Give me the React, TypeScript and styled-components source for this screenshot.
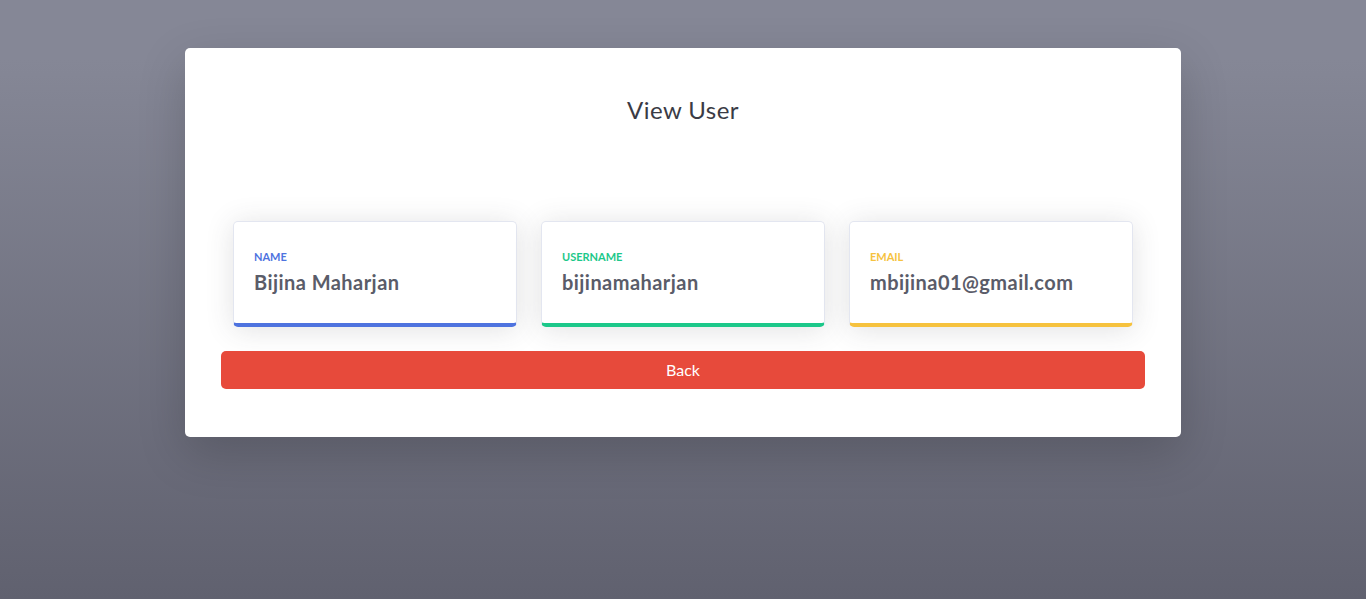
import React from "react";
import styled, { createGlobalStyle } from "styled-components";

const Global = createGlobalStyle`
  html, body { margin: 0; padding: 0; }
  body {
    min-height: 599px;
    background: linear-gradient(180deg, #858796 10%, #60616f 100%);
    font-family: Lato, "Open Sans", sans-serif;
  }
`;

const Page = styled.div`
  min-height: 599px;
  display: flex;
  justify-content: center;
  align-items: flex-start;
  padding-top: 48px;
  box-sizing: border-box;
`;

const Panel = styled.div`
  width: 996px;
  box-sizing: border-box;
  background: #fff;
  border-radius: 5px;
  box-shadow: 0 1rem 3rem rgba(0, 0, 0, 0.175);
  padding: 47px 36px 48px;
  display: flex;
  flex-direction: column;
`;

const Title = styled.h1`
  margin: 0;
  text-align: center;
  font-size: 24px;
  line-height: 29px;
  font-weight: 400;
  letter-spacing: 0.45px;
  color: #3a3b45;
`;

const CardRow = styled.div`
  margin-top: 97px;
  padding: 0 12px;
  display: grid;
  grid-template-columns: repeat(3, 1fr);
  gap: 24px;
`;

const InfoCard = styled.div<{ $accent: string }>`
  background: #fff;
  border: 1px solid #e3e6f0;
  border-bottom: 4px solid ${(p) => p.$accent};
  border-radius: 5px;
  box-shadow: 0 0.15rem 1.75rem rgba(58, 59, 69, 0.15);
  padding: 26px 20px 29px;
  display: flex;
  flex-direction: column;
  gap: 5px;
`;

const Label = styled.div<{ $accent: string }>`
  font-size: 11px;
  line-height: 17px;
  font-weight: 700;
  text-transform: uppercase;
  color: ${(p) => p.$accent};
`;

const Value = styled.div`
  font-size: 20px;
  line-height: 24px;
  font-weight: 700;
  letter-spacing: 0.45px;
  color: #5a5c69;
`;

const BackButton = styled.button`
  margin-top: 24px;
  height: 38px;
  padding: 0 0 2px;
  border: none;
  border-radius: 5px;
  background: #e74a3b;
  color: #fff;
  font-family: inherit;
  font-size: 16px;
  cursor: pointer;
`;

const items = [
  { label: "Name", value: "Bijina Maharjan", accent: "#4e73df" },
  { label: "Username", value: "bijinamaharjan", accent: "#1cc88a" },
  { label: "Email", value: "mbijina01@gmail.com", accent: "#f6c23e" },
];

export default function App() {
  return (
    <>
      <Global />
      <Page>
        <Panel>
          <Title>View User</Title>
          <CardRow>
            {items.map((it) => (
              <InfoCard key={it.label} $accent={it.accent}>
                <Label $accent={it.accent}>{it.label}</Label>
                <Value>{it.value}</Value>
              </InfoCard>
            ))}
          </CardRow>
          <BackButton>Back</BackButton>
        </Panel>
      </Page>
    </>
  );
}
